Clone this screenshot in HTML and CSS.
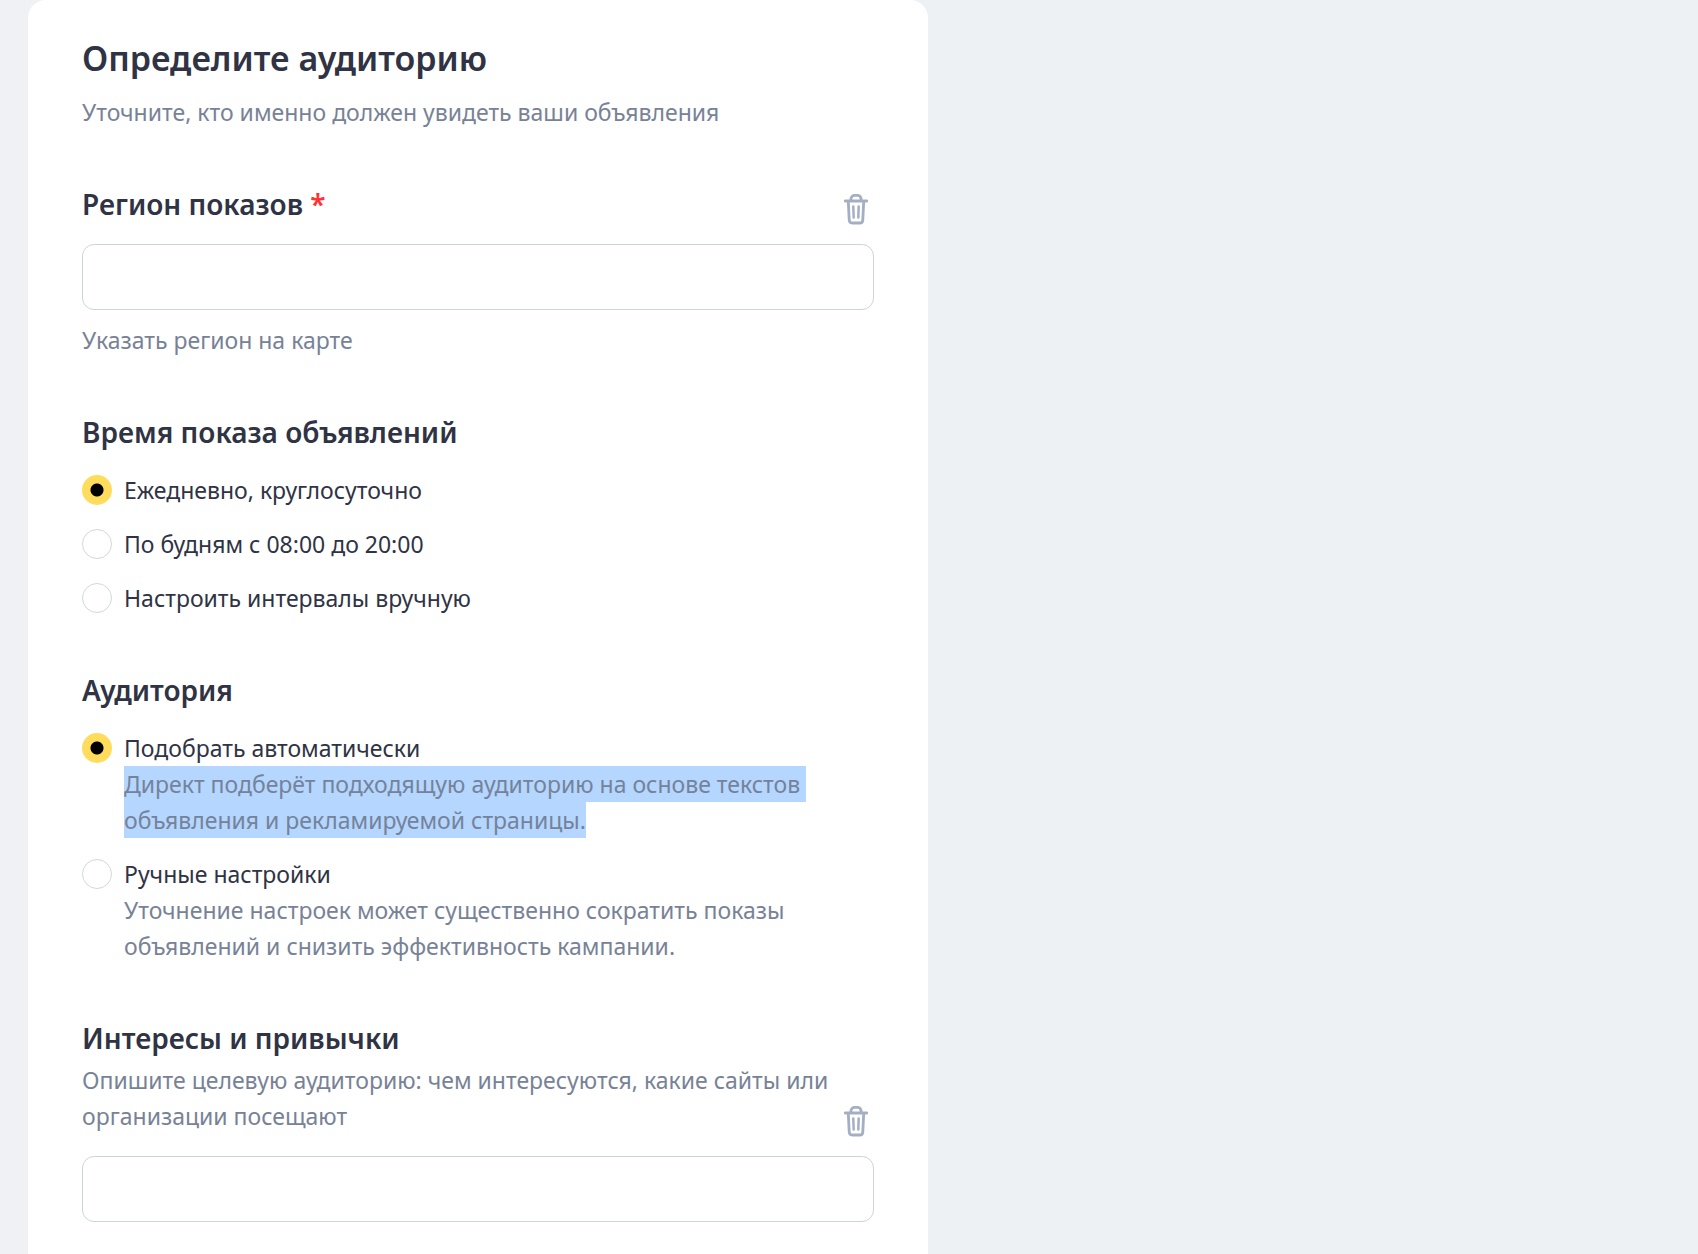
FILE: index.html
```html
<!DOCTYPE html>
<html lang="ru">
<head>
<meta charset="utf-8">
<meta name="viewport" content="width=device-width, initial-scale=1">
<title>Определите аудиторию</title>
<link rel="stylesheet" href="styles.css">
</head>
<body>
<svg class="sprite" aria-hidden="true">
  <symbol id="trash" viewBox="0 0 24 32">
    <path d="M1.300 8h21.400M6.800 7.500C6.800 4 8.500 2.300 10.300 2.300h3.400C15.500 2.300 17.200 4 17.200 7.500M4.300 8.500l.9 18.300q.2 3.200 2.900 3.200h7.800q2.700 0 2.900-3.200L19.700 8.500" fill="none" stroke="currentColor" stroke-width="2.800" stroke-linecap="round" stroke-linejoin="round"/>
    <path d="M9.300 13.500l.4 11M14.700 13.500l-.4 11" fill="none" stroke="currentColor" stroke-width="2.500" stroke-linecap="round"/>
  </symbol>
</svg>
<main class="page">
  <form class="card">
    <header class="intro">
      <h1 class="title">Определите аудиторию</h1>
      <p class="hint">Уточните, кто именно должен увидеть ваши объявления</p>
    </header>

    <section class="section">
      <div class="field-head">
        <h2 class="heading"><label for="region">Регион показов <span class="required">*</span></label></h2>
        <button class="clear" type="button" aria-label="Очистить регион показов"><svg class="icon"><use href="#trash"/></svg></button>
      </div>
      <input class="field" id="region" type="text" required>
      <a class="map-link" href="#map">Указать регион на карте</a>
    </section>

    <section class="section">
      <h2 class="heading">Время показа объявлений</h2>
      <div class="options">
        <label class="option"><input class="radio" type="radio" name="time" checked><span>Ежедневно, круглосуточно</span></label>
        <label class="option"><input class="radio" type="radio" name="time"><span>По будням с 08:00 до 20:00</span></label>
        <label class="option"><input class="radio" type="radio" name="time"><span>Настроить интервалы вручную</span></label>
      </div>
    </section>

    <section class="section">
      <h2 class="heading">Аудитория</h2>
      <div class="options">
        <label class="option"><input class="radio" type="radio" name="audience" checked><span>Подобрать автоматически<span class="details"><mark class="selected">Директ подберёт подходящую аудиторию на основе текстов <br>объявления и рекламируемой страницы.</mark></span></span></label>
        <label class="option"><input class="radio" type="radio" name="audience"><span>Ручные настройки<span class="details">Уточнение настроек может существенно сократить показы <br>объявлений и снизить эффективность кампании.</span></span></label>
      </div>
    </section>

    <section class="section">
      <div class="field-head">
        <div class="field-text">
          <h2 class="heading"><label for="interests">Интересы и привычки</label></h2>
          <p class="hint">Опишите целевую аудиторию: чем интересуются, какие сайты или организации посещают</p>
        </div>
        <button class="clear" type="button" aria-label="Очистить интересы и привычки"><svg class="icon"><use href="#trash"/></svg></button>
      </div>
      <input class="field" id="interests" type="text">
    </section>
  </form>
</main>
</body>
</html>
```
FILE: styles.css
```css
* {
  box-sizing: border-box;
}

body {
  margin: 0;
  background: linear-gradient(90deg, #eff1f5, #edf1f4 40%);
  color: #2f3344;
  font: 23px/36px "Noto Sans", sans-serif;
}

.sprite {
  display: none;
}

.page {
  padding: 0 28px;
}

.card {
  display: flex;
  flex-direction: column;
  gap: 56px;
  max-width: 900px;
  min-height: 100vh;
  padding: 36px 54px 32px;
  border-radius: 18px 18px 0 0;
  background: #fff;
}

.title,
.heading,
.hint {
  margin: 0;
}

.title {
  margin-bottom: 14px;
  font-size: 34px;
  font-weight: 600;
  line-height: 44px;
}

.heading {
  font-size: 28px;
  font-weight: 600;
  line-height: 36px;
}

.hint,
.details,
.map-link {
  color: #788296;
}

.required {
  color: #f33;
}

.section {
  display: flex;
  flex-direction: column;
}

.field-head {
  display: flex;
  align-items: flex-end;
  justify-content: space-between;
  padding-bottom: 22px;
}

.field-text {
  display: grid;
  gap: 6px;
  flex: 1;
  min-width: 0;
}

.clear {
  flex: none;
  width: 24px;
  height: 32px;
  margin: 0 6px -3px 4px;
  padding: 0;
  border: 0;
  background: none;
  color: #a5afc3;
  cursor: pointer;
}

.icon {
  display: block;
  width: 24px;
  height: 32px;
}

.field {
  width: 100%;
  height: 66px;
  padding: 0 20px;
  border: 1px solid #cfd3dc;
  border-radius: 12px;
  background: #fff;
  font: inherit;
  color: inherit;
}

.map-link {
  align-self: flex-start;
  margin-top: 12px;
  text-decoration: none;
}

.options {
  display: grid;
  gap: 18px;
  margin-top: 22px;
}

.option {
  display: flex;
  align-items: flex-start;
  gap: 12px;
}

.radio {
  flex: none;
  width: 30px;
  height: 30px;
  margin: 3px 0;
  appearance: none;
  border: 1px solid #d3d6da;
  border-radius: 50%;
  background: #fff;
}

.radio:checked {
  border: 0;
  background: radial-gradient(circle, #000 6px, #ffdc5c 7px);
}

.details {
  display: block;
  white-space: pre-wrap;
}

.selected {
  padding: 2px 0;
  background: #b5d6ff;
  color: #74839a;
}
```
